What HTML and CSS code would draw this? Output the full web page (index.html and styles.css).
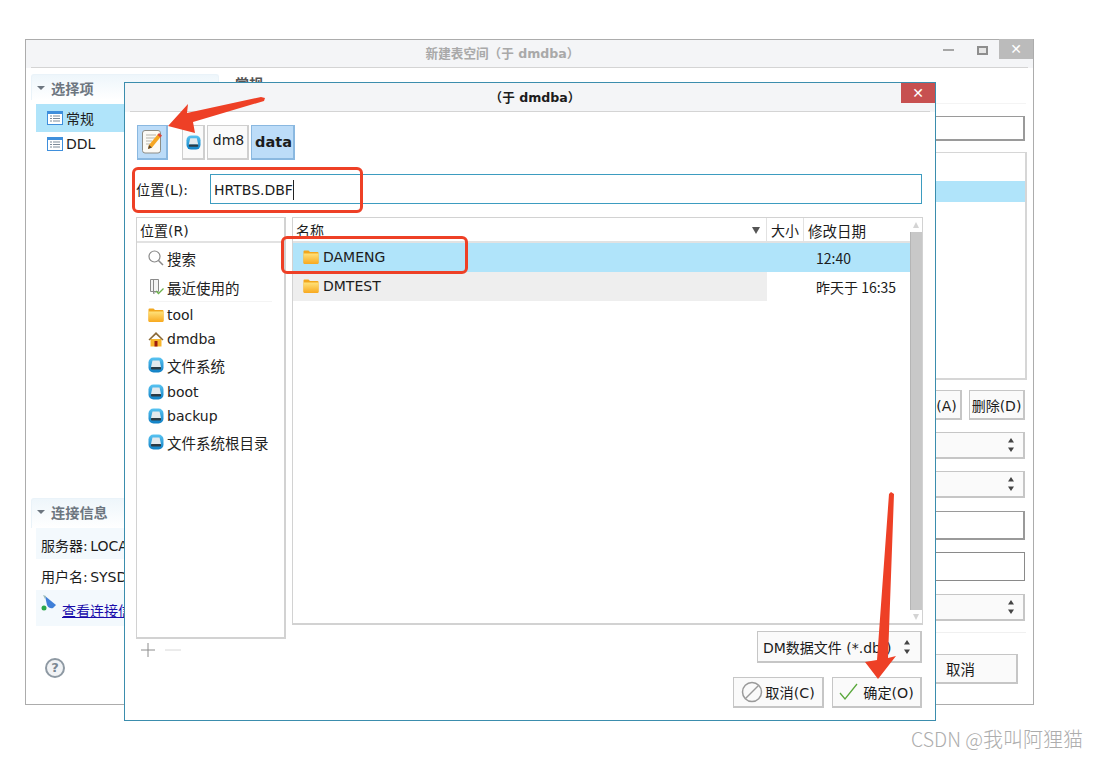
FILE: index.html
```html
<!DOCTYPE html>
<html lang="zh-CN">
<head>
    <meta charset="UTF-8">
    <title>新建表空间</title>
    <link rel="stylesheet" href="styles.css">
</head>
<body>
    <svg class="icon-defs" aria-hidden="true">
        <defs>
            <linearGradient id="folderFill" x1="0" y1="0" x2="0" y2="1">
                <stop offset="0" stop-color="#ffe27a"/>
                <stop offset="1" stop-color="#f8a91f"/>
            </linearGradient>
            <linearGradient id="diskFill" x1="0" y1="0" x2="0" y2="1">
                <stop offset="0" stop-color="#59c4f2"/>
                <stop offset="1" stop-color="#0f7fc4"/>
            </linearGradient>
            <symbol id="i-folder" viewBox="0 0 16 16">
                <path d="M0.5 2.500q0-1 1-1h4l1.500 1.500h7.500q1 0 1 1v9.500q0 1-1 1h-13q-1 0-1-1z" fill="#f2a71e"/>
                <path d="M0.500 4.500h15v9.500q0 1-1 1h-13q-1 0-1-1z" fill="url(#folderFill)"/>
            </symbol>
            <symbol id="i-disk" viewBox="0 0 16 16">
                <rect x="0.500" y="0.500" width="15" height="15" rx="5" fill="url(#diskFill)"/>
                <path d="M4.500 3.500h7l1.500 6.500h-10z" fill="#e3e9ed"/>
                <rect x="3" y="10" width="10" height="2.500" rx="0.800" fill="#2b3a44"/>
            </symbol>
            <symbol id="i-home" viewBox="0 0 16 16">
                <path d="M2.500 8h11v7.500h-11z" fill="#f8b62c"/>
                <path d="M0.500 8.500l7.500-7.500 7.500 7.500-1 1-6.500-6-6.500 6z" fill="#8a6a3a"/>
                <rect x="6.500" y="10" width="3" height="5.500" fill="#9c1c10"/>
            </symbol>
            <symbol id="i-table" viewBox="0 0 16 14">
                <rect x="0.500" y="0.500" width="15" height="13" fill="#fff" stroke="#3f8fdc"/>
                <rect x="1" y="1" width="14" height="2" fill="#3f8fdc"/>
                <path d="M3 5h2M6 5h7M3 7.500h2M6 7.500h7M3 10h2M6 10h7" stroke="#7d8b99"/>
            </symbol>
            <symbol id="i-updown" viewBox="0 0 8 16">
                <path d="M4 1l3 4.500h-6zM4 15l-3-4.500h6z" fill="#444"/>
            </symbol>
        </defs>
    </svg>

    <div class="window back-window">
        <div class="titlebar">
            <span class="back-title">新建表空间（于 dmdba）</span>
            <span class="win-min"></span>
            <span class="win-max"></span>
            <span class="win-close">✕</span>
        </div>
        <div class="back-body">
            <aside class="sidebar">
                <section class="side-top">
                    <div class="side-head"><span class="caret"></span>选择项</div>
                    <div class="side-item selected"><svg class="table-icon"><use href="#i-table"/></svg>常规</div>
                    <div class="side-item"><svg class="table-icon"><use href="#i-table"/></svg>DDL</div>
                </section>
                <section class="side-info">
                    <div class="side-head"><span class="caret"></span>连接信息</div>
                    <div class="info-row tinted">服务器: LOCALHOST</div>
                    <div class="info-row">用户名: SYSDBA</div>
                    <div class="info-row tinted link-row">
                        <svg class="link-icon" viewBox="0 0 16 16">
                            <path d="M4 1l11 9-3 3q-4 1-6-3z" fill="#3f7fd8"/>
                            <path d="M2 0l3 1-1 3z" fill="#9bb"/>
                            <circle cx="3" cy="13" r="2.500" fill="#2aa84a"/>
                        </svg>
                        <a class="info-link">查看连接信息</a>
                    </div>
                </section>
                <div class="help-mark">?</div>
            </aside>
            <main class="back-main">
                <div class="section-title">常规</div>
                <div class="box field"></div>
                <div class="box list-box"><div class="list-sel"></div></div>
                <div class="back-btns">
                    <span class="btn btn-add">添加(A)</span>
                    <span class="btn btn-del">删除(D)</span>
                </div>
                <div class="combo back-combo"><svg class="updown"><use href="#i-updown"/></svg></div>
                <div class="combo back-combo"><svg class="updown"><use href="#i-updown"/></svg></div>
                <div class="box tall-field"></div>
                <div class="box tall-field dark"></div>
                <div class="combo back-combo last"><svg class="updown"><use href="#i-updown"/></svg></div>
                <div class="back-rule"></div>
                <div class="back-foot"><span class="btn btn-back-cancel">取消</span></div>
            </main>
        </div>
    </div>

    <div class="window dialog">
        <div class="titlebar dialog-bar">
            <span class="dialog-title">（于 dmdba）</span>
            <span class="dlg-close">✕</span>
        </div>
        <div class="toolbar">
            <span class="crumb crumb-edit on">
                <svg width="23" height="24" viewBox="0 0 23 24">
                    <rect x="0.500" y="0.500" width="18" height="22.500" rx="2.500" fill="#fbfaf5" stroke="#8d8d86"/>
                    <path d="M4 5h10M4 8h9M4 11h6M4 14h4" stroke="#b5b5ad"/>
                    <path d="M6 19l1-4 9-11 3 2.500-9 11z" fill="#f5a623"/>
                    <path d="M15.500 5l1.500-2 3 2.500-1.500 2z" fill="#d9463a"/>
                    <path d="M6 19l1-4 3 2.500z" fill="#5a4630"/>
                </svg>
            </span>
            <span class="crumb crumb-disk"><svg width="15" height="15"><use href="#i-disk"/></svg></span>
            <span class="crumb crumb-dm8">dm8</span>
            <span class="crumb crumb-data on">data</span>
        </div>
        <div class="location">
            <label class="location-label">位置(L):</label>
            <div class="location-input">HRTBS.DBF<span class="caret-bar"></span></div>
        </div>
        <div class="browser">
            <div class="places-col">
                <div class="panel places">
                    <div class="head-cell places-head">位置(R)</div>
                    <div class="place cjk">
                        <svg class="place-icon" viewBox="0 0 16 16"><circle cx="6.500" cy="6.500" r="5.500" fill="none" stroke="#8a8a8a" stroke-width="1.200"/><path d="M10.500 10.500l4.500 4.500" stroke="#8a8a8a" stroke-width="1.500"/></svg>搜索
                    </div>
                    <div class="place cjk">
                        <svg class="place-icon" viewBox="0 0 16 16"><path d="M2.500 0.500h8v12h-8z" fill="#f4f4f4" stroke="#8a8a8a"/><path d="M5.500 0.500v14l2-1" fill="none" stroke="#8a8a8a"/><path d="M8 12l2.500 2.500 5-5" fill="none" stroke="#6ab04c" stroke-width="1.300"/></svg>最近使用的
                    </div>
                    <div class="place-rule"></div>
                    <div class="place"><svg class="place-icon"><use href="#i-folder"/></svg>tool</div>
                    <div class="place"><svg class="place-icon"><use href="#i-home"/></svg>dmdba</div>
                    <div class="place cjk"><svg class="place-icon"><use href="#i-disk"/></svg>文件系统</div>
                    <div class="place"><svg class="place-icon"><use href="#i-disk"/></svg>boot</div>
                    <div class="place"><svg class="place-icon"><use href="#i-disk"/></svg>backup</div>
                    <div class="place cjk"><svg class="place-icon"><use href="#i-disk"/></svg>文件系统根目录</div>
                </div>
                <div class="place-tools">
                    <svg width="16" height="16" viewBox="0 0 16 16"><path d="M8 1v14M1 8h14" stroke="#8c8c8c"/></svg>
                    <svg width="16" height="16" viewBox="0 0 16 16"><path d="M0 8h16" stroke="#d8d8d8"/></svg>
                </div>
            </div>
            <div class="split-handle"></div>
            <div class="files-col">
                <div class="panel files">
                    <div class="files-main">
                        <div class="files-head">
                            <div class="head-cell col-name">名称<span class="sort-arrow"></span></div>
                            <div class="head-cell col-size">大小</div>
                            <div class="head-cell col-date">修改日期</div>
                        </div>
                        <div class="file-row selected">
                            <div class="col-name file-name"><svg class="file-icon"><use href="#i-folder"/></svg>DAMENG</div>
                            <div class="col-size"></div>
                            <div class="col-date file-date">12:40</div>
                        </div>
                        <div class="file-row">
                            <div class="col-name file-name alt"><svg class="file-icon"><use href="#i-folder"/></svg>DMTEST</div>
                            <div class="col-size"></div>
                            <div class="col-date file-date">昨天于 16:35</div>
                        </div>
                    </div>
                    <div class="scrollbar">
                        <span class="scroll-btn first"><span class="arrow-up"></span></span>
                        <span class="scroll-thumb"></span>
                        <span class="scroll-btn"><span class="arrow-down"></span></span>
                    </div>
                </div>
                <div class="filter-row">
                    <div class="combo filter-combo">DM数据文件 (*.dbf)<svg class="updown"><use href="#i-updown"/></svg></div>
                </div>
            </div>
        </div>
        <div class="dialog-foot">
            <span class="btn foot-btn">
                <svg width="22" height="22" viewBox="0 0 22 22"><circle cx="11" cy="11" r="9.500" fill="none" stroke="#9a9a9a" stroke-width="1.500"/><path d="M4.500 17.500l13-13" stroke="#9a9a9a" stroke-width="1.500"/></svg>取消(C)
            </span>
            <span class="btn foot-btn ok">
                <svg width="20" height="18" viewBox="0 0 20 18"><path d="M1 10l5 6 12-15" fill="none" stroke="#5aa83c" stroke-width="1.300"/></svg>确定(O)
            </span>
        </div>
    </div>

    <div class="mark mark-location"></div>
    <div class="mark mark-folder"></div>
    <svg class="arrows" viewBox="0 0 1098 759">
        <polygon points="168,126 188,104 187,113 261,97 265,98 264,101 193,122 195,133"/>
        <polygon points="889,494 891,492 894,494 888,658 896,656 878,679 865,662 877,660"/>
    </svg>
    <div class="watermark"><span class="wm-latin">CSDN @</span>我叫阿狸猫</div>
</body>
</html>
```
FILE: styles.css
```css
* {
    box-sizing: border-box;
}
body {
    font-family: "DejaVu Sans", "Noto Sans CJK SC", sans-serif;
    font-size: 14px;
    color: #1c1c1c;
    margin: 0;
    background-color: #fff;
    width: 1098px;
    height: 759px;
    position: relative;
    overflow: hidden;
}
.icon-defs {
    position: absolute;
    width: 0;
    height: 0;
}
.window {
    position: absolute;
    background: #fff;
    display: flex;
    flex-direction: column;
}
.titlebar {
    background: #f4f5f7;
    position: relative;
    flex: none;
}
.titlebar::after {
    content: "";
    position: absolute;
    left: 5px;
    right: 5px;
    bottom: 0;
    height: 1px;
    background: #d4d4d4;
}

/* back window */
.back-window {
    left: 25px;
    top: 39px;
    width: 1009px;
    height: 666px;
    border: 1px solid #acacac;
}
.back-window .titlebar {
    height: 28px;
}
.back-title {
    position: absolute;
    left: 0;
    right: 54px;
    top: 3px;
    text-align: center;
    font-weight: bold;
    color: #a9a9a9;
    font-size: 12.600px;
}
.win-min {
    position: absolute;
    left: 917px;
    top: 9px;
    width: 11px;
    height: 2px;
    background: #a6a6a6;
}
.win-max {
    position: absolute;
    left: 951px;
    top: 6px;
    width: 11px;
    height: 9px;
    border: 2px solid #8e8e8e;
    background: #e6e6e6;
}
.win-close {
    position: absolute;
    right: 0;
    top: -1px;
    width: 34px;
    height: 20px;
    background: #bbb;
    color: #fff;
    font-weight: bold;
    text-align: center;
    line-height: 20px;
    font-size: 14px;
}
.back-body {
    flex: 1;
    display: flex;
    min-height: 0;
}
.sidebar {
    width: 209px;
    padding: 6px 0 0 5px;
    display: flex;
    flex-direction: column;
    flex: none;
}
.side-top {
    height: 402px;
    margin-bottom: 22px;
    width: 188px;
}
.side-head {
    height: 26px;
    color: #6d7680;
    font-weight: bold;
    font-size: 14.200px;
    display: flex;
    align-items: center;
    padding-left: 5px;
    gap: 6px;
    border: 1px solid #eaf3f9;
    border-bottom: 0;
    border-radius: 3px 3px 0 0;
    background: linear-gradient(#eef6fb, #fff);
}
.caret {
    width: 0;
    height: 0;
    border-left: 4px solid transparent;
    border-right: 4px solid transparent;
    border-top: 4px solid #6d7680;
}
.side-item {
    height: 24px;
    margin-left: 5px;
    padding-left: 11px;
    display: flex;
    align-items: center;
    gap: 3px;
}
.side-item.selected {
    height: 28px;
    background: #b0e4fa;
    margin-top: 4px;
}
.table-icon {
    width: 16px;
    height: 14px;
}
.side-info {
    width: 188px;
}
.side-info .side-head {
    height: 30px;
    padding-bottom: 3px;
}
.info-row {
    height: 31px;
    margin-left: 5px;
    padding: 2px 0 0 5px;
    display: flex;
    align-items: center;
    white-space: nowrap;
    word-spacing: -2px;
    overflow: hidden;
}
.info-row.tinted {
    background: #f3f9fd;
}
.link-row {
    height: 36px;
    gap: 5px;
    align-items: flex-start;
    padding-top: 5px;
}
.link-icon {
    width: 16px;
    height: 16px;
    flex: none;
}
.info-link {
    color: #1a0dab;
    text-decoration: underline;
    padding-top: 5px;
}
.help-mark {
    width: 20px;
    height: 20px;
    margin: 32px 0 0 14px;
    border-radius: 50%;
    border: 2px solid #8e99a3;
    background: #f1f3f5;
    color: #7b8792;
    font-weight: bold;
    font-size: 13px;
    line-height: 16px;
    text-align: center;
}
.back-main {
    flex: 1;
    padding: 5px 7px 0 0;
}
.section-title {
    font-weight: bold;
    height: 31px;
    margin-bottom: 12px;
    color: #555;
    border-bottom: 1px solid #f4f4f4;
}
.box {
    background: #fff;
    border: 1px solid #ccc;
}
.field {
    height: 25px;
    margin-right: 1px;
    border: 2px solid #9a9a9a;
    border-width: 1px 2px 2px 1px;
}
.list-box {
    height: 228px;
    margin-top: 11px;
    padding-top: 28px;
    border: 2px solid #d6d6d6;
    border-width: 1px 2px 2px 1px;
    margin-right: -1px;
}
.list-sel {
    height: 21px;
    background: #b0e4fa;
}
.btn {
    display: inline-flex;
    align-items: center;
    justify-content: center;
    background: #fafafa;
    border: 1px solid #c6c6c6;
    border-width: 1px 2px 2px 1px;
}
.back-btns {
    display: flex;
    justify-content: flex-end;
    gap: 7px;
    margin-top: 10px;
    height: 30px;
    margin-right: 1px;
}
.btn-add {
    width: 58px;
    white-space: nowrap;
}
.btn-del {
    width: 56px;
    white-space: nowrap;
}
.combo {
    display: flex;
    align-items: center;
    background: #fafafa;
    border: 1px solid #c6c6c6;
    border-width: 1px 2px 2px 1px;
    position: relative;
}
.back-combo {
    height: 27px;
    margin: 12px 1px 0 0;
    justify-content: flex-end;
    padding-right: 8px;
}
.back-combo.last {
    margin-top: 13px;
}
.updown {
    width: 8px;
    height: 16px;
    flex: none;
}
.tall-field {
    height: 29px;
    margin: 13px 1px 0 0;
    border: 1px solid #9a9a9a;
    border-width: 1px 2px 2px 1px;
}
.tall-field.dark {
    margin-top: 12px;
    border: 1px solid #8a8a8a;
}
.back-rule {
    height: 1px;
    background: #f0f0f0;
    margin: 11px 0 0 0;
}
.back-foot {
    display: flex;
    justify-content: flex-end;
    margin-top: 21px;
    padding-right: 8px;
}
.btn-back-cancel {
    width: 116px;
    height: 30px;
    padding-left: 2px;
    font-size: 14.500px;
}

/* file dialog */
.dialog {
    left: 124px;
    top: 82px;
    width: 812px;
    height: 639px;
    border: 1px solid #3b8dad;
}
.dialog-bar {
    height: 29px;
}
.dialog-title {
    position: absolute;
    left: 10px;
    right: 0;
    top: 4px;
    text-align: center;
    font-weight: bold;
    font-size: 12.600px;
}
.dlg-close {
    position: absolute;
    right: 0;
    top: 0;
    width: 34px;
    height: 20px;
    background: #c75050;
    color: #fff;
    font-weight: bold;
    text-align: center;
    line-height: 20px;
    font-size: 14px;
}
.toolbar {
    display: flex;
    height: 35px;
    margin: 13px 0 0 12px;
}
.crumb {
    display: flex;
    align-items: center;
    justify-content: center;
    background: #fafafa;
    border: 1px solid #cfcfcf;
    border-width: 1px 2px 2px 1px;
    margin-right: 2px;
}
.crumb.on {
    background: #bcdcf8;
    border-color: #8ab8e0;
}
.crumb-edit {
    width: 31px;
    margin-right: 14px;
    padding-left: 3px;
}
.crumb-disk {
    width: 23px;
}
.crumb-dm8 {
    width: 42px;
    padding: 0 0 5px 2px;
}
.crumb-data {
    width: 44px;
    padding-left: 2px;
    font-weight: bold;
    font-size: 14.500px;
}
.location {
    display: flex;
    align-items: center;
    margin: 14px 0 0 11px;
    height: 30px;
}
.location-label {
    width: 74px;
    font-size: 14.200px;
}
.location-input {
    width: 712px;
    height: 30px;
    border: 1px solid #3d9cc0;
    padding: 1px 0 0 3px;
    display: flex;
    align-items: center;
    background: #fff;
}
.caret-bar {
    width: 1px;
    height: 20px;
    background: #222;
}
.browser {
    display: flex;
    margin: 13px 0 0 11px;
    height: 428px;
}
.panel {
    border: 1px solid #d2d2d2;
    border-width: 1px 2px 2px 1px;
    background: #fff;
}
.places-col {
    width: 150px;
    flex: none;
}
.places {
    height: 422px;
}
.head-cell {
    height: 25px;
    border-bottom: 2px solid #e2e2e2;
    padding: 1px 0 0 3px;
    display: flex;
    align-items: center;
    background: #fff;
}
.place {
    height: 24px;
    display: flex;
    align-items: center;
    padding: 2px 0 0 11px;
    gap: 3px;
    color: #222;
}
.place.cjk {
    height: 29px;
    padding-top: 1px;
    font-size: 14.500px;
}
.place-icon {
    width: 16px;
    height: 16px;
    flex: none;
}
.place-rule {
    height: 1px;
    margin: 0 12px;
    background: #f4f4f4;
}
.place-tools {
    display: flex;
    gap: 9px;
    padding: 3px 0 0 4px;
}
.split-handle {
    width: 6px;
    flex: none;
}
.files-col {
    width: 631px;
    flex: none;
}
.files {
    height: 408px;
    display: flex;
    border-right-width: 1px;
}
.files-main {
    flex: 1;
    min-width: 0;
}
.files-head,
.file-row {
    display: flex;
}
.col-name {
    width: 474px;
    position: relative;
}
.col-size {
    width: 37px;
    font-family: "Noto Sans CJK SC", sans-serif;
}
.col-date {
    flex: 1;
    font-family: "Noto Sans CJK SC", sans-serif;
}
.files-head .col-name,
.files-head .col-size {
    border-right: 1px solid #e2e2e2;
}
.files-head .col-size {
    padding-left: 4px;
}
.files-head .col-date {
    padding-left: 4px;
    font-size: 14.500px;
}
.sort-arrow {
    position: absolute;
    right: 6px;
    top: 9px;
    width: 0;
    height: 0;
    border-left: 4px solid transparent;
    border-right: 4px solid transparent;
    border-top: 7px solid #555;
}
.file-row {
    height: 29px;
}
.file-row.selected {
    background: #b0e4fa;
}
.file-name {
    display: flex;
    align-items: center;
    padding: 0 0 1px 10px;
    gap: 4px;
}
.file-name.alt {
    background: #eeeeee;
}
.file-icon {
    width: 16px;
    height: 16px;
}
.file-date {
    padding: 1px 0 0 12px;
    display: flex;
    align-items: center;
}
.scrollbar {
    width: 12px;
    flex: none;
    display: flex;
    flex-direction: column;
}
.scroll-btn {
    height: 13px;
    flex: none;
    display: flex;
    align-items: center;
    justify-content: center;
}
.scroll-btn.first {
    height: 14px;
}
.scroll-thumb {
    flex: 1;
    background: #c8c8c8;
    border-left: 1px solid #b5b5b5;
}
.arrow-up,
.arrow-down {
    width: 0;
    height: 0;
    border-left: 3px solid transparent;
    border-right: 3px solid transparent;
}
.arrow-up {
    border-bottom: 6px solid #d4d4d4;
}
.arrow-down {
    border-top: 6px solid #d4d4d4;
}
.filter-row {
    display: flex;
    justify-content: flex-end;
    margin-top: 6px;
    padding-right: 1px;
}
.filter-combo {
    width: 165px;
    height: 32px;
    padding-left: 5px;
    font-size: 14px;
    white-space: nowrap;
}
.filter-combo .updown {
    position: absolute;
    right: 9px;
    top: 7px;
}
.dialog-foot {
    display: flex;
    justify-content: flex-end;
    gap: 8px;
    margin: 32px 13px 0 0;
}
.foot-btn {
    width: 91px;
    height: 31px;
    gap: 2px;
    font-size: 14.200px;
}
.foot-btn.ok {
    width: 90px;
    gap: 4px;
}

/* annotations drawn on top of the screenshot */
.mark {
    position: absolute;
    border: 3px solid #ee4026;
    border-radius: 6px;
}
.mark-location {
    left: 132px;
    top: 167px;
    width: 231px;
    height: 46px;
}
.mark-folder {
    left: 281px;
    top: 236px;
    width: 187px;
    height: 38px;
}
.arrows {
    position: absolute;
    left: 0;
    top: 0;
    width: 1098px;
    height: 759px;
    fill: #ee4026;
}
.watermark {
    position: absolute;
    right: 15px;
    top: 726px;
    color: #adadad;
    font-family: "Noto Sans CJK SC", sans-serif;
    font-size: 20px;
    line-height: 26px;
    font-weight: 300;
}
.wm-latin {
    font-size: 19.500px;
}
```
